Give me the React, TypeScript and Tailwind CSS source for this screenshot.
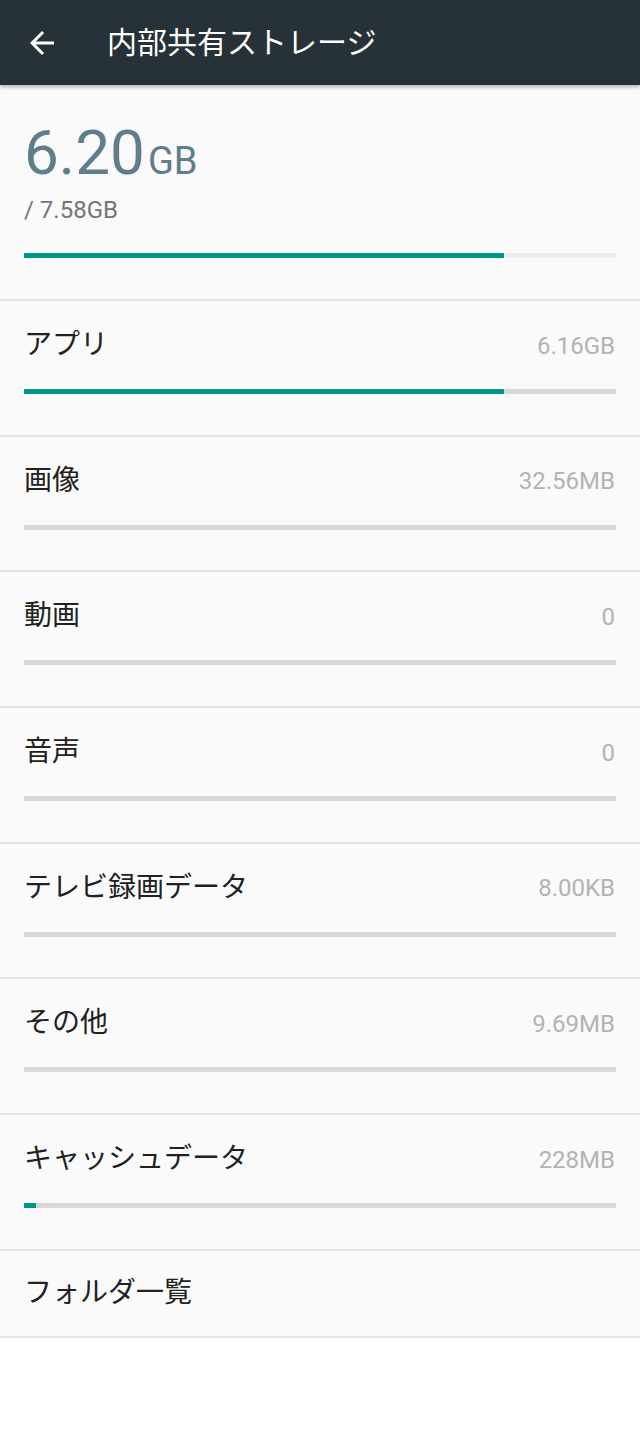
const items = [
  { label: 'アプリ', value: '6.16GB', fill: 'w-[81%]' },
  { label: '画像', value: '32.56MB', fill: 'w-0' },
  { label: '動画', value: '0', fill: 'w-0' },
  { label: '音声', value: '0', fill: 'w-0' },
  { label: 'テレビ録画データ', value: '8.00KB', fill: 'w-0' },
  { label: 'その他', value: '9.69MB', fill: 'w-0' },
  { label: 'キャッシュデータ', value: '228MB', fill: 'w-[2%]' },
];

function Divider() {
  return <div className="h-[2px] bg-[#e4e4e4]" />;
}

function UsageRow({ label, value, fill }: { label: string; value: string; fill: string }) {
  return (
    <div>
      <Divider />
      <div className="px-6 pt-[28px] pb-[40.7px]">
        <div className="flex h-8 items-center justify-between">
          <span className="text-[28px] leading-8 text-[#212121]">{label}</span>
          <span className="mt-px mr-px text-[24px] leading-8 text-[#b3b3b3]">{value}</span>
        </div>
        <div className="mt-[28px] h-[5px] bg-[#d7d7d7]">
          <div className={`h-full bg-[#009688] ${fill}`} />
        </div>
      </div>
    </div>
  );
}

export default function App() {
  return (
    <div className="min-h-[1439px] bg-white font-['Roboto','Noto_Sans_CJK_JP',sans-serif]">
      {/* ツールバー */}
      <header className="relative z-10 flex h-[85px] items-center bg-[#263238] pl-6 shadow-[0_2px_4px_rgba(0,0,0,0.3)]">
        <svg viewBox="0 0 24 24" className="h-9 w-9 fill-white">
          <path d="M20 11H7.83l5.59-5.59L12 4l-8 8 8 8 1.41-1.41L7.83 13H20v-2z" />
        </svg>
        <h1 className="ml-[47px] text-[30px] leading-none font-normal text-white">内部共有ストレージ</h1>
      </header>

      <main className="bg-[#fafafa]">
        {/* 使用量サマリー */}
        <section className="px-6 pt-[37px] pb-[41px]">
          <div className="flex items-baseline text-[#607d8b]">
            <span className="text-[62px] leading-none">6.20</span>
            <span className="ml-[3px] text-[38px] leading-none">GB</span>
          </div>
          <p className="mt-[14px] text-[24px] leading-none text-[#757575]">/ 7.58GB</p>
          <div className="mt-[31px] h-[5px] bg-[#efefef]">
            <div className="h-full w-[81%] bg-[#009688]" />
          </div>
        </section>

        {items.map((item) => (
          <UsageRow key={item.label} {...item} />
        ))}

        <Divider />
        <div className="flex h-[85px] items-center px-6">
          <span className="text-[28px] leading-8 text-[#212121]">フォルダ一覧</span>
        </div>
        <Divider />
      </main>
    </div>
  );
}
